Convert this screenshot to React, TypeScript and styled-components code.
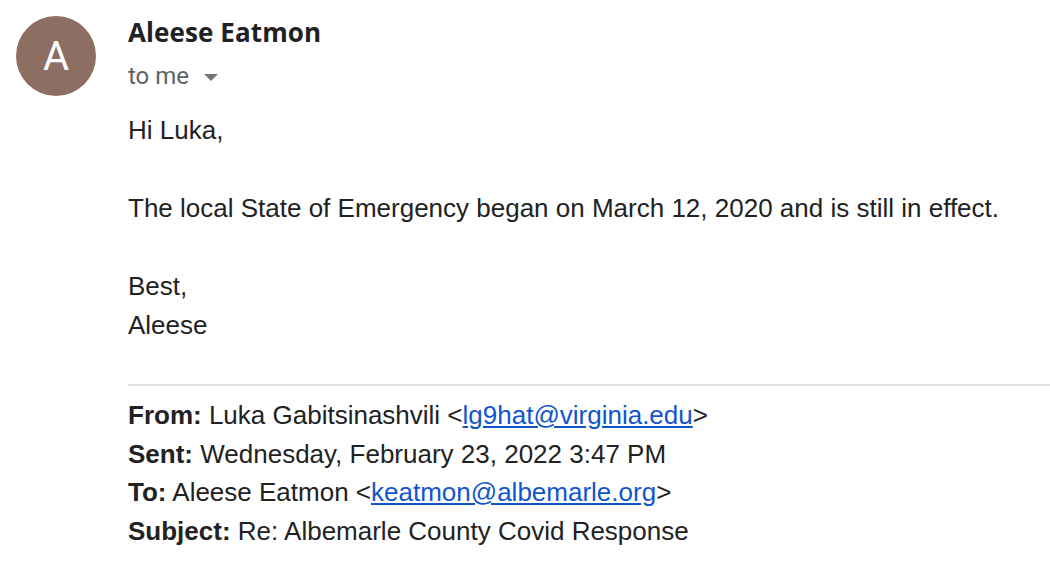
import React from "react";
import styled, { createGlobalStyle } from "styled-components";

const Global = createGlobalStyle`
  html, body { margin: 0; padding: 0; background: #ffffff; }
  body { width: 1050px; height: 573px; overflow: hidden; }
`;

const Page = styled.div`
  display: flex;
  align-items: flex-start;
  gap: 32px;
  padding: 16px 0 0 16px;
`;

const Avatar = styled.div`
  flex: none;
  width: 80px;
  height: 80px;
  border-radius: 50%;
  background: #8d6e63;
  color: #ffffff;
  display: flex;
  align-items: center;
  justify-content: center;
  font-family: Roboto, "Liberation Sans", sans-serif;
  font-size: 40px;
  font-weight: 400;
`;

const Content = styled.div`
  flex: 1;
  display: flex;
  flex-direction: column;
`;

const SenderName = styled.div`
  font-family: "Open Sans", Roboto, sans-serif;
  font-weight: 700;
  font-size: 26px;
  letter-spacing: 0.1px;
  line-height: 32px;
  color: #202124;
`;

const Recipient = styled.div`
  display: flex;
  align-items: center;
  gap: 15px;
  margin-top: 12px;
  font-family: Roboto, "Liberation Sans", sans-serif;
  font-size: 24px;
  line-height: 32px;
  color: #5f6368;
`;

const Caret = styled.svg`
  width: 14px;
  height: 7px;
  margin-top: 2px;
`;

const Body = styled.div`
  margin-top: 19px;
  font-family: "Liberation Sans", Arial, sans-serif;
  font-size: 26px;
  line-height: 39px;
  color: #222222;
`;

const Line = styled.div<{ $gap?: boolean }>`
  margin-top: ${(p) => (p.$gap ? "39px" : "0")};
`;

const Divider = styled.hr`
  margin: 39px 0 0 0;
  border: none;
  height: 2px;
  background: #e1e1e1;
`;

const Header = styled.div`
  margin-top: 10px;
  font-family: "Liberation Sans", Arial, sans-serif;
  font-size: 26px;
  line-height: 38.5px;
  color: #222222;
`;

const Label = styled.b`
  font-weight: 700;
`;

const Mail = styled.a`
  color: #1155cc;
  text-decoration: underline;
`;

export default function App() {
  return (
    <>
      <Global />
      <Page>
        <Avatar>A</Avatar>
        <Content>
          <SenderName>Aleese Eatmon</SenderName>
          <Recipient>
            to me
            <Caret viewBox="0 0 14 7">
              <path d="M0 0 L14 0 L7 7 Z" fill="#757575" />
            </Caret>
          </Recipient>
          <Body>
            <Line>Hi Luka,</Line>
            <Line $gap>The local State of Emergency began on March 12, 2020 and is still in effect.</Line>
            <Line $gap>Best,</Line>
            <Line>Aleese</Line>
          </Body>
          <Divider />
          <Header>
            <div>
              <Label>From:</Label> Luka Gabitsinashvili &lt;<Mail href="#">lg9hat@virginia.edu</Mail>&gt;
            </div>
            <div>
              <Label>Sent:</Label> Wednesday, February 23, 2022 3:47 PM
            </div>
            <div>
              <Label>To:</Label> Aleese Eatmon &lt;<Mail href="#">keatmon@albemarle.org</Mail>&gt;
            </div>
            <div>
              <Label>Subject:</Label> Re: Albemarle County Covid Response
            </div>
          </Header>
        </Content>
      </Page>
    </>
  );
}
